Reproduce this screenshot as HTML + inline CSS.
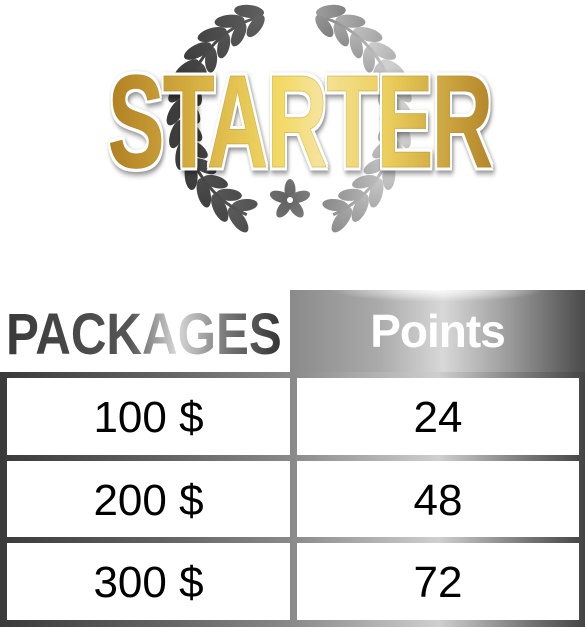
<!DOCTYPE html>
<html><head><meta charset="utf-8"><style>
html,body{margin:0;padding:0;background:#fff;}
body{width:585px;height:627px;position:relative;overflow:hidden;font-family:"Liberation Sans",sans-serif;}
.abs{position:absolute;}
#star{left:0;top:52px;width:585px;text-align:center;}
#star span{display:inline-block;font-weight:bold;font-size:132px;line-height:140px;transform:scaleX(0.64);letter-spacing:-2px;
background:linear-gradient(90deg,#b07f22 0%,#d9b445 25%,#f3da66 45%,#f5e39a 55%,#ecd05e 72%,#b4862a 100%);
-webkit-background-clip:text;background-clip:text;color:transparent;-webkit-text-stroke:1px rgba(180,130,40,0.3);
filter:drop-shadow(3px 0 0 #fff) drop-shadow(-3px 0 0 #fff) drop-shadow(0 3px 0 #fff) drop-shadow(0 -3px 0 #fff) drop-shadow(2px 3px 3px rgba(0,0,0,.45));}
#pk{left:6px;top:305px;font-weight:bold;font-size:58px;line-height:60px;transform-origin:0 0;transform:scaleX(0.85);
background:linear-gradient(90deg,#3a3a3a 0%,#555 45%,#d8d8d8 62%,#777 80%,#333 100%);-webkit-background-clip:text;background-clip:text;color:transparent;}
#ph{left:290px;top:290px;width:295px;height:82px;background:linear-gradient(90deg,#8a8a8a 0%,#aaa 30%,#d8d8d8 52%,#999 75%,#4a4a4a 100%);}
#ph:before{content:"";position:absolute;left:40px;right:40px;top:0;height:12px;background:radial-gradient(ellipse at 50% 0,rgba(255,255,255,.9),rgba(255,255,255,0) 70%);}
#ph span{position:absolute;left:0;right:0;top:16px;text-align:center;color:#fff;font-weight:bold;font-size:46px;line-height:50px;letter-spacing:-1px;}
#frame{left:0;top:372px;width:585px;height:255px;background:linear-gradient(90deg,#3a3a3a 0%,#666 30%,#8a8a8a 50%,#cfcfcf 75%,#777 90%,#444 100%);}
.c{position:absolute;background:#fff;text-align:center;font-size:44px;color:#000;}
</style></head><body>
<svg class="abs" style="left:0;top:0" width="585" height="260" id="wr">
<defs><linearGradient id="g" gradientUnits="userSpaceOnUse" x1="180" y1="0" x2="400" y2="0">
<stop offset="0" stop-color="#3c3c3c"/><stop offset="0.5" stop-color="#6a6a6a"/><stop offset="1" stop-color="#d0d0d0"/></linearGradient></defs>
<g id="lv" fill="url(#g)"></g>
</svg>
<script>
(function(){var g=document.getElementById('lv'),s='';var cx=290,cy=118,r=106;
for(var side=-1;side<=1;side+=2){
 for(var t=24;t<=160;t+=11){var a=t*Math.PI/180;var x=cx+side*r*Math.sin(a),y=cy+r*Math.cos(a);
  var tx=side*Math.cos(a),ty=-Math.sin(a);
  var ang=Math.atan2(ty,tx)*180/Math.PI;
  var nx=side*Math.sin(a),ny=Math.cos(a);
  var ox=x+nx*8+tx*6,oy=y+ny*8+ty*6,ix=x-nx*8+tx*6,iy=y-ny*8+ty*6;
  s+='<ellipse cx="'+ox+'" cy="'+oy+'" rx="15" ry="6.5" transform="rotate('+(ang+side*-30)+' '+ox+' '+oy+')"/>';
  s+='<ellipse cx="'+ix+'" cy="'+iy+'" rx="13" ry="6" transform="rotate('+(ang+side*30)+' '+ix+' '+iy+')"/>';
 }
 s+='<path d="M'+(cx+side*r*Math.sin(0.42))+' '+(cy+r*Math.cos(0.42))+' A'+r+' '+r+' 0 0 '+(side<0?1:0)+' '+(cx+side*r*Math.sin(2.8))+' '+(cy+r*Math.cos(2.8))+'" stroke="url(#g)" stroke-width="3" fill="none"/>';
}
var fx=290,fy=200;for(var k=0;k<5;k++){var an=-90+k*72;var px=fx+10*Math.cos(an*Math.PI/180),py=fy+10*Math.sin(an*Math.PI/180);s+='<ellipse cx="'+px+'" cy="'+py+'" rx="11" ry="5.5" transform="rotate('+an+' '+px+' '+py+')"/>';}
s+='<circle cx="290" cy="200" r="3" fill="#fff"/>';
g.innerHTML=s;})();
</script>
<div id="star" class="abs"><span>STARTER</span></div>
<div id="pk" class="abs">PACKAGES</div>
<div id="ph" class="abs"><span>Points</span></div>
<div id="frame" class="abs">
 <div class="c" style="left:7px;top:6px;width:283px;height:77px;line-height:80px">100 $</div>
 <div class="c" style="left:297px;top:6px;width:282px;height:77px;line-height:80px">24</div>
 <div class="c" style="left:7px;top:89px;width:283px;height:76px;line-height:80px">200 $</div>
 <div class="c" style="left:297px;top:89px;width:282px;height:76px;line-height:80px">48</div>
 <div class="c" style="left:7px;top:171px;width:283px;height:77px;line-height:80px">300 $</div>
 <div class="c" style="left:297px;top:171px;width:282px;height:77px;line-height:80px">72</div>
</div>
</body></html>
